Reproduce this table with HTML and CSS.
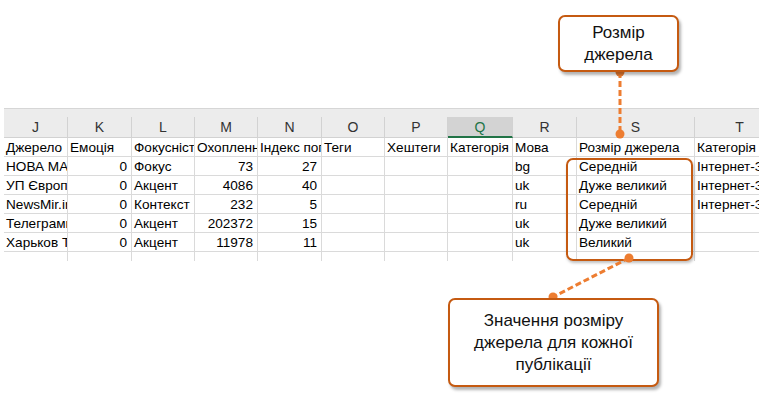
FILE: index.html
```html
<!DOCTYPE html>
<html lang="uk">
<head>
<meta charset="utf-8">
<title>Розмір джерела</title>
<link rel="stylesheet" href="styles.css">
</head>
<body>
<div class="page">
  <div class="sheet">
    <div class="band"></div>
    <div class="grid">
      <div class="ch">J</div><div class="ch">K</div><div class="ch">L</div><div class="ch">M</div><div class="ch">N</div><div class="ch">O</div><div class="ch">P</div><div class="ch sel">Q</div><div class="ch">R</div><div class="ch">S</div><div class="ch">T</div>

      <div class="c">Джерело</div><div class="c">Емоція</div><div class="c">Фокусність</div><div class="c">Охоплення</div><div class="c">Індекс популярності</div><div class="c">Теги</div><div class="c">Хештеги</div><div class="c">Категорія</div><div class="c">Мова</div><div class="c">Розмір джерела</div><div class="c">Категорія</div>

      <div class="c">НОВА МАКЕДОНИЯ</div><div class="c n">0</div><div class="c">Фокус</div><div class="c n">73</div><div class="c n">27</div><div class="c"></div><div class="c"></div><div class="c"></div><div class="c">bg</div><div class="c">Середній</div><div class="c">Інтернет-ЗМІ</div>

      <div class="c">УП Європейська правда</div><div class="c n">0</div><div class="c">Акцент</div><div class="c n">4086</div><div class="c n">40</div><div class="c"></div><div class="c"></div><div class="c"></div><div class="c">uk</div><div class="c">Дуже великий</div><div class="c">Інтернет-ЗМІ</div>

      <div class="c">NewsMir.info</div><div class="c n">0</div><div class="c">Контекст</div><div class="c n">232</div><div class="c n">5</div><div class="c"></div><div class="c"></div><div class="c"></div><div class="c">ru</div><div class="c">Середній</div><div class="c">Інтернет-ЗМІ</div>

      <div class="c">Телеграмм канал</div><div class="c n">0</div><div class="c">Акцент</div><div class="c n">202372</div><div class="c n">15</div><div class="c"></div><div class="c"></div><div class="c"></div><div class="c">uk</div><div class="c">Дуже великий</div><div class="c"></div>

      <div class="c">Харьков Today</div><div class="c n">0</div><div class="c">Акцент</div><div class="c n">11978</div><div class="c n">11</div><div class="c"></div><div class="c"></div><div class="c"></div><div class="c">uk</div><div class="c">Великий</div><div class="c"></div>

      <div class="c last"></div><div class="c last"></div><div class="c last"></div><div class="c last"></div><div class="c last"></div><div class="c last"></div><div class="c last"></div><div class="c last"></div><div class="c last"></div><div class="c last"></div><div class="c last"></div>
    </div>
  </div>

  <div class="highlight"></div>

  <svg class="connectors" width="759" height="399" viewBox="0 0 759 399">
    <line x1="620" y1="72" x2="620" y2="134" class="dash"/>
    <circle cx="620" cy="72" r="4.5" class="dot"/>
    <circle cx="620" cy="134" r="4.5" class="dot"/>
    <line x1="629" y1="258" x2="553" y2="297" class="dash"/>
    <circle cx="629" cy="258" r="4.5" class="dot"/>
    <circle cx="553" cy="297" r="4.5" class="dot"/>
  </svg>

  <div class="callout callout-top">Розмір<br>джерела</div>
  <div class="callout callout-bottom">Значення розміру<br>джерела для кожної<br>публікації</div>
</div>
</body>
</html>
```

FILE: styles.css
```css
* { box-sizing: border-box; }
html, body { margin: 0; padding: 0; background: #fff; }
body { font-family: "Liberation Sans", Arial, sans-serif; color: #000; }

.page {
  position: relative;
  width: 759px;
  height: 399px;
  overflow: hidden;
}

.sheet {
  padding-top: 108px;
  padding-left: 4px;
  width: 759px;
  overflow: hidden;
}

.band {
  height: 9px;
  width: 800px;
  background: #ececec;
  border-top: 1px solid #d6d6d6;
}

.grid {
  display: grid;
  grid-template-columns: 64px 64px 63px 63px 64px 63px 63px 65px 64px 118px 90px;
  grid-template-rows: 21px;
  grid-auto-rows: 19px;
  width: 821px;
  font-size: 13.6px;
}

.ch {
  background: #ececec;
  border-right: 1px solid #d2d2d2;
  border-bottom: 1px solid #d2d2d2;
  text-align: center;
  line-height: 21px;
  font-size: 14px;
  color: #333;
}
.ch.sel {
  background: #d3d3d3;
  color: #217346;
  border-bottom: 2px solid #217346;
}

.c {
  border-right: 1px solid #dadada;
  border-bottom: 1px solid #dadada;
  padding: 1px 2px 0;
  line-height: 18px;
  white-space: nowrap;
  overflow: hidden;
}
.c.n { text-align: right; padding-right: 4px; }
.c.last { height: 9px; border-bottom: none; }

.highlight {
  position: absolute;
  left: 566px;
  top: 158px;
  width: 127px;
  height: 103px;
  border: 2px solid #c55a11;
  border-radius: 7px;
  box-shadow: 1px 2px 3px rgba(0,0,0,0.25);
}

.connectors {
  position: absolute;
  left: 0;
  top: 0;
}
.dash {
  stroke: #ed7d31;
  stroke-width: 3;
  stroke-dasharray: 6 3;
}
.dot { fill: #ed7d31; }

.callout {
  position: absolute;
  background: #fff;
  border: 2px solid #c55a11;
  border-radius: 7px;
  box-shadow: 2px 3px 3px rgba(0,0,0,0.3);
  text-align: center;
  font-size: 17px;
  line-height: 22px;
  color: #111;
  display: flex;
  align-items: center;
  justify-content: center;
}
.callout-top {
  left: 558px;
  top: 15px;
  width: 121px;
  height: 57px;
}
.callout-bottom {
  left: 448px;
  top: 298px;
  width: 211px;
  height: 89px;
}
```
